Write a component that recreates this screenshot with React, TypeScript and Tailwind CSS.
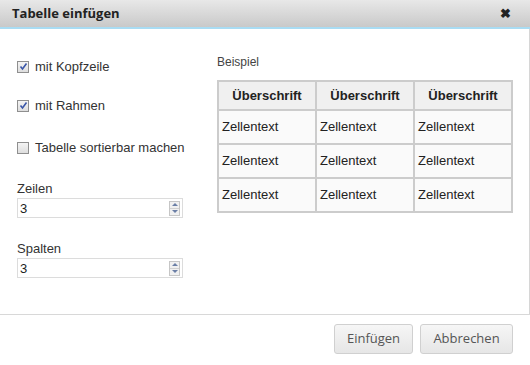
import { useState } from "react";

const Spinner = ({ value }: { value: string }) => (
  <div className="mt-[2px] flex h-[20px] w-[166px] items-center border border-[#dcdcdc] bg-white pl-[2px] pr-[2px]">
    <span className="flex-1 text-[13px] leading-none text-[#222]">{value}</span>
    <div className="flex h-[15px] w-[11px] flex-col border border-[#c6c6c6] bg-[#f0f0f0]">
      <div className="flex flex-1 items-center justify-center border-b border-[#d0d0d0]">
        <div className="h-0 w-0 border-x-[3px] border-b-[3px] border-x-transparent border-b-[#6b7fa6]" />
      </div>
      <div className="flex flex-1 items-center justify-center">
        <div className="h-0 w-0 border-x-[3px] border-t-[3px] border-x-transparent border-t-[#6b7fa6]" />
      </div>
    </div>
  </div>
);

const Check = ({ checked, label }: { checked: boolean; label: string }) => (
  <label className="flex items-center gap-[6px] text-[13px] leading-[19px] text-[#333]">
    <span className="flex h-[12px] w-[12px] items-center justify-center border border-[#8f8f8f] bg-gradient-to-b from-[#f4f4f4] to-[#dedede]">
      {checked && (
        <svg width="9" height="9" viewBox="0 0 9 9">
          <path d="M1.5 4.5 L3.5 7 L7.5 1.5" stroke="#3a56a8" strokeWidth="1.6" fill="none" />
        </svg>
      )}
    </span>
    {label}
  </label>
);

export default function App() {
  const [rows] = useState(["1", "2", "3"]);
  return (
    <div className="h-[365px] w-[530px] bg-white font-['Liberation_Sans',Arial,sans-serif]">
      <div className="flex h-[29px] items-center justify-between border-b-2 border-[#a9dcf3] bg-gradient-to-b from-[#e8e8e8] to-[#c9c9c9] pl-[12px] pr-[19px] font-['Open_Sans',Verdana,sans-serif]">
        <span className="text-[13px] font-bold text-[#222]">Tabelle einfügen</span>
        <span className="text-[13px] font-bold text-[#222]">✖</span>
      </div>
      <div className="flex h-[285px] border-r border-[#d6d6d6]">
        <div className="w-[200px] pl-[17px] pt-[28px]">
          <div className="flex flex-col gap-[20px]">
            <Check checked label="mit Kopfzeile" />
            <Check checked label="mit Rahmen" />
            <div className="mt-[3px]">
              <Check checked={false} label="Tabelle sortierbar machen" />
            </div>
          </div>
          <div className="mt-[24px] text-[13px] leading-[15px] text-[#333]">Zeilen</div>
          <Spinner value="3" />
          <div className="mt-[23px] text-[13px] leading-[15px] text-[#333]">Spalten</div>
          <Spinner value="3" />
        </div>
        <div className="pl-[17px] pt-[26px]">
          <div className="mb-[10px] text-[12px] leading-[15px] text-[#444]">Beispiel</div>
          <table className="border-collapse text-[13px] text-[#222]">
            <thead>
              <tr className="h-[29px] bg-[#f0f0f0]">
                {["a", "b", "c"].map((k) => (
                  <th key={k} className="w-[98px] border-2 border-[#cccccc] text-center font-bold">
                    Überschrift
                  </th>
                ))}
              </tr>
            </thead>
            <tbody>
              {rows.map((r) => (
                <tr key={r} className="h-[34px] bg-[#fafafa]">
                  {["a", "b", "c"].map((k) => (
                    <td key={k} className="border-2 border-[#cccccc] px-[3px]">
                      Zellentext
                    </td>
                  ))}
                </tr>
              ))}
            </tbody>
          </table>
        </div>
      </div>
      <div className="flex justify-end gap-[7px] border-t border-[#d8d8d8] pr-[17px] pt-[9px] font-['Open_Sans',Verdana,sans-serif]">
        <button className="h-[30px] w-[79px] rounded-[3px] border border-[#d0d0d0] bg-gradient-to-b from-[#f6f6f6] to-[#e6e6e6] text-[13px] text-[#555]">
          Einfügen
        </button>
        <button className="h-[30px] w-[93px] rounded-[3px] border border-[#d0d0d0] bg-gradient-to-b from-[#f6f6f6] to-[#e6e6e6] text-[13px] text-[#555]">
          Abbrechen
        </button>
      </div>
    </div>
  );
}
